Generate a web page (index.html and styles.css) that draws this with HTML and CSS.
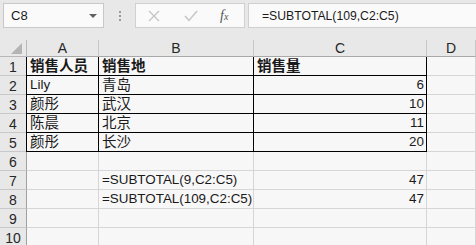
FILE: index.html
```html
<!doctype html>
<html lang="zh-CN">
<head>
<meta charset="UTF-8">
<meta name="viewport" content="width=device-width, initial-scale=1">
<title>SUBTOTAL</title>
<link rel="stylesheet" href="styles.css">
</head>
<body>
<div class="toolbar">
    <div class="namebox">
        <span>C8</span>
        <span class="caret"></span>
    </div>
    <div class="grip"><i></i><i></i><i></i></div>
    <div class="fxbox">
        <svg class="btn" width="12" height="12" viewBox="0 0 12 12">
            <path d="M1 1 L11 11 M11 1 L1 11" stroke="#c4c4c4" stroke-width="1.3" fill="none"/>
        </svg>
        <svg class="btn" width="14" height="12" viewBox="0 0 14 12">
            <path d="M1 6 L5 10.5 L13 1" stroke="#c4c4c4" stroke-width="1.4" fill="none"/>
        </svg>
        <span class="fx">f<sub>x</sub></span>
    </div>
    <div class="formula">=SUBTOTAL(109,C2:C5)</div>
</div>

<div class="sheet">
    <!-- header row -->
    <div class="corner"><span class="tri"></span></div>
    <div class="colhead">A</div>
    <div class="colhead">B</div>
    <div class="colhead">C</div>
    <div class="colhead">D</div>

    <div class="rowhead">1</div>
    <div class="cell cjk bold tb ta">销售人员</div>
    <div class="cell cjk bold tb">销售地</div>
    <div class="cell cjk bold tb">销售量</div>
    <div class="cell"></div>

    <div class="rowhead">2</div>
    <div class="cell tb ta">Lily</div>
    <div class="cell cjk tb">青岛</div>
    <div class="cell num tb">6</div>
    <div class="cell"></div>

    <div class="rowhead">3</div>
    <div class="cell cjk tb ta">颜彤</div>
    <div class="cell cjk tb">武汉</div>
    <div class="cell num tb">10</div>
    <div class="cell"></div>

    <div class="rowhead">4</div>
    <div class="cell cjk tb ta">陈晨</div>
    <div class="cell cjk tb">北京</div>
    <div class="cell num tb">11</div>
    <div class="cell"></div>

    <div class="rowhead">5</div>
    <div class="cell cjk tb ta">颜彤</div>
    <div class="cell cjk tb">长沙</div>
    <div class="cell num tb">20</div>
    <div class="cell"></div>

    <div class="rowhead">6</div>
    <div class="cell"></div>
    <div class="cell"></div>
    <div class="cell"></div>
    <div class="cell"></div>

    <div class="rowhead">7</div>
    <div class="cell"></div>
    <div class="cell">=SUBTOTAL(9,C2:C5)</div>
    <div class="cell num">47</div>
    <div class="cell"></div>

    <div class="rowhead">8</div>
    <div class="cell"></div>
    <div class="cell">=SUBTOTAL(109,C2:C5)</div>
    <div class="cell num">47</div>
    <div class="cell"></div>

    <div class="rowhead">9</div>
    <div class="cell"></div>
    <div class="cell"></div>
    <div class="cell"></div>
    <div class="cell"></div>

    <div class="rowhead">10</div>
    <div class="cell"></div>
    <div class="cell"></div>
    <div class="cell"></div>
    <div class="cell"></div>
</div>
</body>
</html>
```

FILE: styles.css
```css
body {
    margin: 0;
    padding: 0;
    width: 476px;
    height: 245px;
    overflow: hidden;
    background: #e8e8e8;
    font-family: "Liberation Sans", "Noto Sans CJK SC", sans-serif;
    color: #1a1a1a;
}

.toolbar {
    height: 40px;
    display: flex;
    align-items: flex-start;
    padding-top: 3px;
    box-sizing: border-box;
}

.namebox {
    margin-left: 3px;
    width: 101px;
    height: 25px;
    box-sizing: border-box;
    background: #fafafa;
    border: 1px solid #c8c8c8;
    display: flex;
    align-items: center;
    justify-content: space-between;
    padding: 0 6px 0 7px;
    font-size: 13px;
}

.caret {
    width: 0;
    height: 0;
    border-left: 4px solid transparent;
    border-right: 4px solid transparent;
    border-top: 4px solid #606060;
}

.grip {
    width: 31px;
    height: 25px;
    display: flex;
    flex-direction: column;
    align-items: center;
    justify-content: center;
    gap: 2px;
}

.grip i {
    display: block;
    width: 2px;
    height: 2px;
    background: #9a9a9a;
}

.fxbox {
    width: 110px;
    height: 25px;
    box-sizing: border-box;
    background: #fafafa;
    border: 1px solid #d0d0d0;
    display: flex;
    align-items: center;
    padding-left: 12px;
    gap: 24px;
}

.fx {
    font-family: "Liberation Serif", serif;
    font-style: italic;
    font-size: 14px;
    color: #555;
    margin-left: -2px;
}

.fx sub {
    font-size: 10px;
    vertical-align: 0;
}

.formula {
    flex: 1;
    margin-left: 3px;
    height: 25px;
    box-sizing: border-box;
    background: #fafafa;
    border: 1px solid #d0d0d0;
    border-right: none;
    display: flex;
    align-items: center;
    padding-left: 13px;
    font-size: 12.2px;
}

.sheet {
    display: grid;
    grid-template-columns: 27px 72px 155px 173px 1fr;
    grid-template-rows: 17px repeat(10, 19px);
}

.corner, .colhead, .rowhead {
    background: #e8e8e8;
    box-sizing: border-box;
    border-right: 1px solid #b8b8b8;
    border-bottom: 1px solid #b8b8b8;
    color: #262626;
    font-size: 14px;
    display: flex;
    justify-content: center;
    align-items: center;
}

.colhead {
    border-right-color: #c8c8c8;
    border-bottom-color: #a8a8a8;
}

.rowhead {
    border-bottom-color: #c8c8c8;
    border-right-color: #a0a0a0;
    padding-top: 1px;
}

.corner {
    justify-content: flex-end;
    align-items: flex-end;
    padding: 0 4px 2px 0;
}

.tri {
    width: 0;
    height: 0;
    border-left: 11px solid transparent;
    border-bottom: 11px solid #b4b4b4;
}

.cell {
    background: #f7f7f7;
    box-sizing: border-box;
    border-right: 1px solid #d6d6d6;
    border-bottom: 1px solid #d6d6d6;
    display: flex;
    align-items: flex-end;
    padding: 0 3px 1px 3px;
    font-size: 13.4px;
    line-height: 16px;
    white-space: nowrap;
    overflow: hidden;
}

.cjk {
    font-size: 14.5px;
    letter-spacing: 0;
}

.bold {
    font-weight: bold;
}

.num {
    justify-content: flex-end;
    padding-right: 2px;
}

/* table borders A1:C5 */
.tb {
    border-right-color: #000;
    border-bottom-color: #000;
}

.ta {
    margin-left: -1px;
    border-left: 1px solid #000;
}
```
